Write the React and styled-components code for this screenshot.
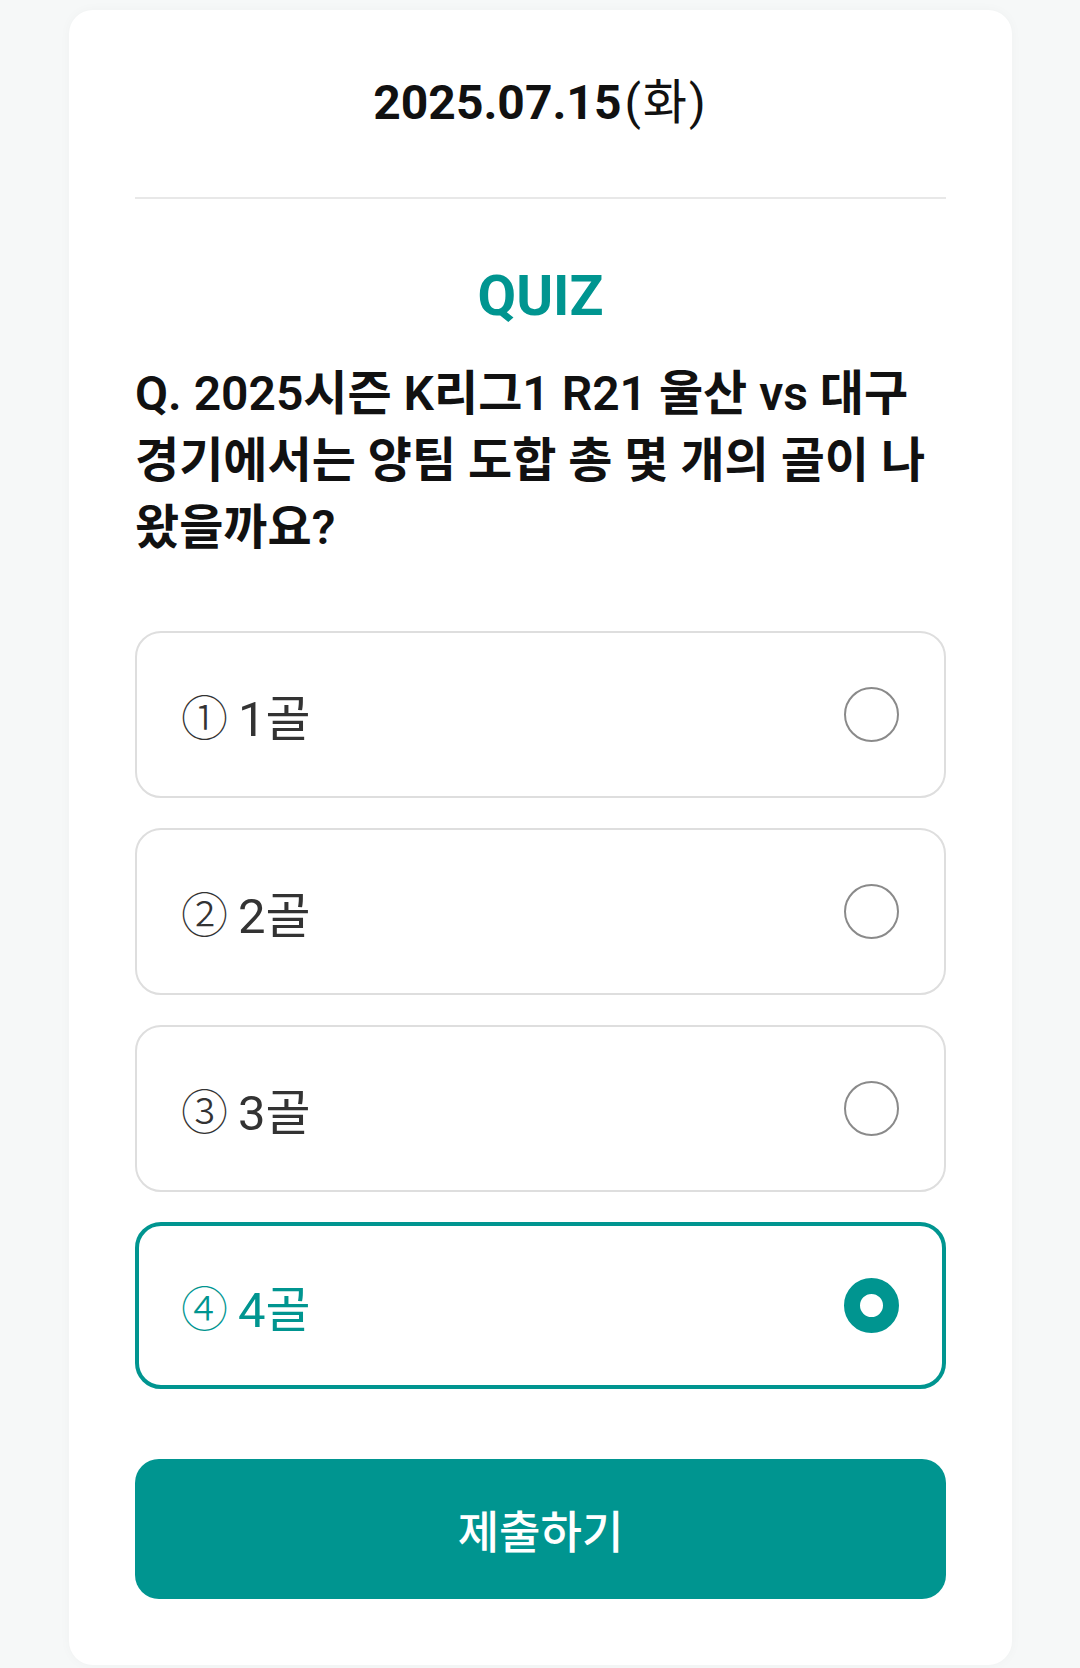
import React, { useState } from "react";
import styled, { createGlobalStyle, css } from "styled-components";

const GlobalStyle = createGlobalStyle`
  html, body {
    margin: 0;
    padding: 0;
    background: #f6f8f8;
  }
  body {
    font-family: Roboto, "Noto Sans CJK KR", sans-serif;
    color: #111;
  }
`;

const TEAL = "#009590";

const Page = styled.div`
  padding: 10px 68px 3px 69px;
  box-sizing: border-box;
`;

const Card = styled.div`
  background: #fff;
  border-radius: 24px;
  box-shadow: 0 0 12px rgba(0, 0, 0, 0.03);
  padding: 63px 66px 66px;
  display: flex;
  flex-direction: column;
`;

const DateText = styled.div`
  text-align: center;
  font-size: 48px;
  line-height: 60px;
  font-weight: 700;
  color: #111;
`;

const Weekday = styled.span`
  font-weight: 400;
  margin-left: 3px;
  letter-spacing: 2px;
`;

const Divider = styled.hr`
  border: none;
  height: 2px;
  background: #e8e8e8;
  margin: 64px 0 0;
`;

const QuizTitle = styled.h2`
  margin: 65px 0 0;
  text-align: center;
  color: ${TEAL};
  font-size: 56px;
  line-height: 64px;
  font-weight: 700;
`;

// default word-break lets the last word split between syllables, like the reference
const Question = styled.p`
  margin: 32px 0 0;
  font-size: 48px;
  line-height: 67px;
  font-weight: 600;
  color: #111;
  word-break: normal;
`;

const Options = styled.div`
  margin-top: 70px;
  display: flex;
  flex-direction: column;
  gap: 30px;
`;

const Option = styled.button`
  display: flex;
  align-items: center;
  justify-content: space-between;
  height: 167px;
  box-sizing: border-box;
  padding: 0 45px 0 44px;
  background: #fff;
  border-radius: 26px;
  cursor: pointer;
  font-family: inherit;
  border: 2px solid #dedede;
  ${(p) =>
    p.$selected &&
    css`
      border: 4px solid ${TEAL};
      padding: 0 43px 0 42px;
    `}
`;

const OptionLabel = styled.span`
  display: flex;
  align-items: center;
  gap: 10px;
  font-size: 49px;
  color: ${(p) => (p.$selected ? TEAL : "#333")};
`;

const Circled = styled.span`
  font-family: "Noto Sans CJK KR", sans-serif;
  font-size: 47px;
  font-weight: 300;
`;

const Radio = styled.span`
  width: 55px;
  height: 55px;
  box-sizing: border-box;
  border-radius: 50%;
  border: 2px solid #8a8a8a;
  ${(p) =>
    p.$selected &&
    css`
      border: 16px solid ${TEAL};
      background: #fff;
    `}
`;

const SubmitButton = styled.button`
  margin-top: 70px;
  height: 140px;
  border: none;
  border-radius: 24px;
  background: ${TEAL};
  color: #fff;
  font-family: inherit;
  font-size: 45px;
  font-weight: 500;
  cursor: pointer;
`;

const choices = [
  { mark: "①", text: "1골" },
  { mark: "②", text: "2골" },
  { mark: "③", text: "3골" },
  { mark: "④", text: "4골" },
];

export default function App() {
  const [selected, setSelected] = useState(3);

  return (
    <Page>
      <GlobalStyle />
      <Card>
        <DateText>
          2025.07.15<Weekday>(화)</Weekday>
        </DateText>
        <Divider />
        <QuizTitle>QUIZ</QuizTitle>
        <Question>
          Q. 2025시즌 K리그1 R21 울산 vs 대구 경기에서는 양팀 도합 총 몇 개의 골이 나왔을까요?
        </Question>
        <Options>
          {choices.map((c, i) => (
            <Option key={c.mark} $selected={selected === i} onClick={() => setSelected(i)}>
              <OptionLabel $selected={selected === i}>
                <Circled>{c.mark}</Circled>
                {c.text}
              </OptionLabel>
              <Radio $selected={selected === i} />
            </Option>
          ))}
        </Options>
        <SubmitButton>제출하기</SubmitButton>
      </Card>
    </Page>
  );
}
